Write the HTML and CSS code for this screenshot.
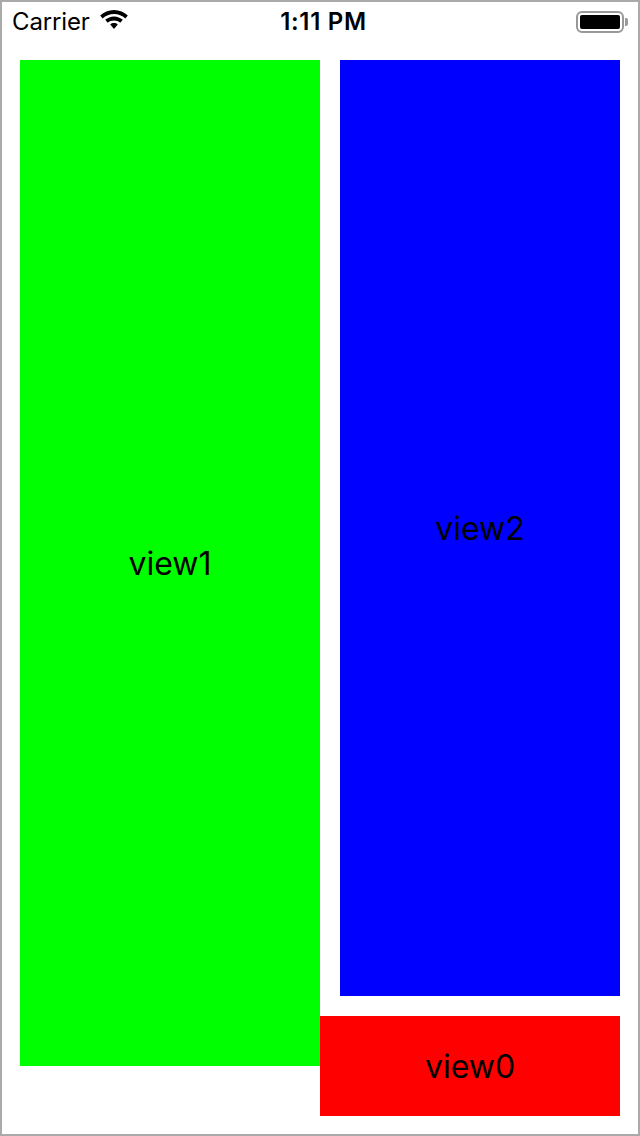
FILE: index.html
```html
<!DOCTYPE html>
<html lang="en">
<head>
<meta charset="utf-8">
<title>Views</title>
<link rel="stylesheet" href="styles.css">
</head>
<body>
<div class="frame">
  <header class="status">
    <div class="status-left">
      <span class="carrier">Carrier</span>
      <svg class="wifi" width="32" height="23" viewBox="0 0 30 22" aria-hidden="true">
        <path d="M15 2.800c5.200 0 9.800 2 13.200 5.400l-2.300 2.700C22.900 8.300 19.200 6.800 15 6.800S7.100 8.300 4.100 10.900L1.800 8.200C5.200 4.800 9.800 2.800 15 2.800z"/>
        <path d="M15 9c3.300 0 6.200 1.200 8.400 3.300l-2.400 2.700c-1.500-1.400-3.700-2.200-6-2.200s-4.500.8-6 2.200l-2.400-2.700C8.800 10.200 11.700 9 15 9z"/>
        <path d="M15 15.400c1.400 0 2.600.5 3.600 1.300L15 21l-3.600-4.300c1-.8 2.200-1.300 3.600-1.300z"/>
      </svg>
    </div>
    <div class="time">1:11 PM</div>
    <div class="status-right">
      <div class="battery"><div class="charge"></div></div>
      <div class="cap"></div>
    </div>
  </header>
  <main class="board">
    <div class="view green"><span>view1</span></div>
    <div class="view blue"><span>view2</span></div>
    <div class="view red"><span>view0</span></div>
  </main>
</div>
</body>
</html>
```
FILE: styles.css
```css
* { box-sizing: border-box; }
html, body { margin: 0; padding: 0; }
body { background: #fff; font-family: Inter, "Liberation Sans", sans-serif; color: #000; }
.frame {
  width: 640px;
  height: 1136px;
  border: 2px solid #aaa;
  display: flex;
  flex-direction: column;
  overflow: hidden;
}
.status {
  height: 38px;
  padding: 0 10px;
  display: grid;
  grid-template-columns: 1fr auto 1fr;
  align-items: center;
}
.status-left { display: flex; align-items: center; gap: 8px; }
.carrier { font-size: 24px; line-height: 38px; letter-spacing: -0.15px; }
.wifi { display: block; margin-bottom: 6px; }
.time { font-size: 24px; font-weight: 600; line-height: 38px; letter-spacing: 0.7px; margin: 1px 0 0 7px; }
.status-right { display: flex; align-items: center; justify-content: flex-end; gap: 1px; }
.battery {
  width: 48px;
  height: 22px;
  border: 2px solid #999;
  border-radius: 6px;
  padding: 2px;
}
.charge { width: 100%; height: 100%; background: #000; border-radius: 2px; }
.cap { width: 3px; height: 8px; background: #999; border-radius: 0 2px 2px 0; }
.board {
  padding: 20px 18px 0;
  display: grid;
  grid-template-columns: 300px 300px;
  grid-template-rows: 936px 100px;
  row-gap: 20px;
}
.view {
  display: flex;
  align-items: center;
  justify-content: center;
  font-size: 32px;
}
.green { grid-column: 1; grid-row: 1 / span 2; height: 1006px; background: #0f0; }
.blue { grid-column: 2; grid-row: 1; margin-left: 20px; background: #00f; }
.red { grid-column: 2; grid-row: 2; background: #f00; }
```
